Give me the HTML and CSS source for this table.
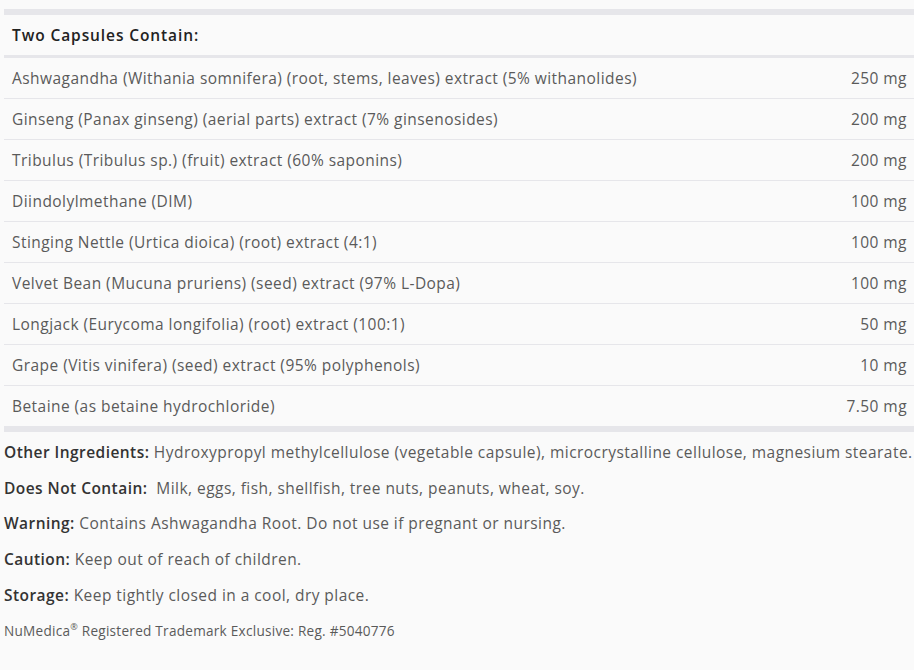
FILE: index.html
```html
<!DOCTYPE html>
<html>
<head>
<meta charset="utf-8">
<link rel="stylesheet" href="styles.css">
</head>
<body>
<div class="page">
  <div class="facts">
    <div class="head">Two Capsules Contain:</div>
    <div class="row"><span>Ashwagandha (Withania somnifera) (root, stems, leaves) extract (5% withanolides)</span><span>250 mg</span></div>
    <div class="row"><span>Ginseng (Panax ginseng) (aerial parts) extract (7% ginsenosides)</span><span>200 mg</span></div>
    <div class="row"><span>Tribulus (Tribulus sp.) (fruit) extract (60% saponins)</span><span>200 mg</span></div>
    <div class="row"><span>Diindolylmethane (DIM)</span><span>100 mg</span></div>
    <div class="row"><span>Stinging Nettle (Urtica dioica) (root) extract (4:1)</span><span>100 mg</span></div>
    <div class="row"><span>Velvet Bean (Mucuna pruriens) (seed) extract (97% L-Dopa)</span><span>100 mg</span></div>
    <div class="row"><span>Longjack (Eurycoma longifolia) (root) extract (100:1)</span><span>50 mg</span></div>
    <div class="row"><span>Grape (Vitis vinifera) (seed) extract (95% polyphenols)</span><span>10 mg</span></div>
    <div class="row last"><span>Betaine (as betaine hydrochloride)</span><span>7.50 mg</span></div>
  </div>
  <div class="notes">
    <p><b>Other Ingredients:</b> Hydroxypropyl methylcellulose (vegetable capsule), microcrystalline cellulose, magnesium stearate.</p>
    <p><b>Does Not Contain:</b>&nbsp; Milk, eggs, fish, shellfish, tree nuts, peanuts, wheat, soy.</p>
    <p><b>Warning:</b> Contains Ashwagandha Root. Do not use if pregnant or nursing.</p>
    <p><b>Caution:</b> Keep out of reach of children.</p>
    <p><b>Storage:</b> Keep tightly closed in a cool, dry place.</p>
    <p class="tm">NuMedica<sup>®</sup> Registered Trademark Exclusive: Reg. #5040776</p>
  </div>
</div>
</body>
</html>
```
FILE: styles.css
```css
html, body {
  margin: 0;
  background: #fafafa;
}
body {
  font-family: "Open Sans", Lato, sans-serif;
  font-size: 15.5px;
  letter-spacing: 0.45px;
  color: #5a5a5a;
}
.page {
  padding: 9px 0 0 4px;
}
.facts {
  border-top: 6px solid #e6e6ea;
  border-bottom: 6px solid #e6e6ea;
}
.head {
  height: 40px;
  display: flex;
  align-items: center;
  padding: 0 8px;
  font-weight: 600;
  letter-spacing: 0.9px;
  color: #222;
  border-bottom: 3px solid #e6e6ea;
}
.row {
  height: 40px;
  display: flex;
  align-items: center;
  justify-content: space-between;
  padding: 0 7px 0 8px;
  border-bottom: 1px solid #e6e6ea;
}
.row.last {
  border-bottom: none;
}
.notes {
  padding-top: 2px;
}
.notes p {
  margin: 0;
  padding: 7.9px 0;
  line-height: 20px;
}
.notes b {
  font-weight: 600;
  color: #333;
}
.notes .tm {
  font-size: 13.6px;
  letter-spacing: 0.25px;
}
.notes sup {
  font-size: 9px;
  line-height: 0;
}
```
